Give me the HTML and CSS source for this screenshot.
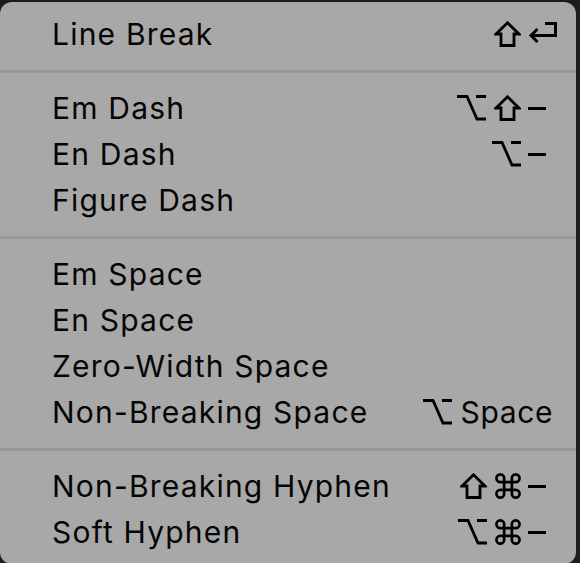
FILE: index.html
```html
<!DOCTYPE html>
<html>
<head>
<meta charset="utf-8">
<link rel="stylesheet" href="styles.css">
</head>
<body>
<div class="menu">
  <div class="row"><span class="label">Line Break</span>
    <span class="sc">
      <span class="mods">
        <svg class="mod" viewBox="0 0 27 26"><path d="M13.5 1.8 L25 13 H20 V24.5 H7 V13 H2 Z"/></svg>
      </span>
      <span class="key"><svg class="ret" viewBox="0 0 29 21"><path d="M17 1.5 H27.5 V13.5 H3 M9.5 7 L3 13.5 L9.5 20"/></svg></span>
    </span>
  </div>
  <div class="sep"></div>
  <div class="row"><span class="label">Em Dash</span>
    <span class="sc">
      <span class="mods">
        <svg class="mod" viewBox="0 0 29 26"><path d="M0 1.5 H10 L20 24 H29 M19 1.5 H29"/></svg>
        <svg class="mod" viewBox="0 0 27 26"><path d="M13.5 1.8 L25 13 H20 V24.5 H7 V13 H2 Z"/></svg>
      </span>
      <span class="key"><span class="minus"></span></span>
    </span>
  </div>
  <div class="row"><span class="label">En Dash</span>
    <span class="sc">
      <span class="mods">
        <svg class="mod" viewBox="0 0 29 26"><path d="M0 1.5 H10 L20 24 H29 M19 1.5 H29"/></svg>
      </span>
      <span class="key"><span class="minus"></span></span>
    </span>
  </div>
  <div class="row"><span class="label">Figure Dash</span></div>
  <div class="sep"></div>
  <div class="row"><span class="label">Em Space</span></div>
  <div class="row"><span class="label">En Space</span></div>
  <div class="row"><span class="label">Zero-Width Space</span></div>
  <div class="row"><span class="label">Non-Breaking Space</span>
    <span class="sc">
      <span class="mods">
        <svg class="mod" viewBox="0 0 29 26"><path d="M0 1.5 H10 L20 24 H29 M19 1.5 H29"/></svg>
      </span>
      <span class="key text">Space</span>
    </span>
  </div>
  <div class="sep"></div>
  <div class="row"><span class="label">Non-Breaking Hyphen</span>
    <span class="sc">
      <span class="mods">
        <svg class="mod" viewBox="0 0 27 26"><path d="M13.5 1.8 L25 13 H20 V24.5 H7 V13 H2 Z"/></svg>
        <svg class="mod" viewBox="0 0 27 27"><path d="M9.5 5.5 A4 4 0 1 0 5.5 9.5 H21.5 A4 4 0 1 0 17.5 5.5 V21.5 A4 4 0 1 0 21.5 17.5 H5.5 A4 4 0 1 0 9.5 21.5 Z"/></svg>
      </span>
      <span class="key"><span class="minus"></span></span>
    </span>
  </div>
  <div class="row"><span class="label">Soft Hyphen</span>
    <span class="sc">
      <span class="mods">
        <svg class="mod" viewBox="0 0 29 26"><path d="M0 1.5 H10 L20 24 H29 M19 1.5 H29"/></svg>
        <svg class="mod" viewBox="0 0 27 27"><path d="M9.5 5.5 A4 4 0 1 0 5.5 9.5 H21.5 A4 4 0 1 0 17.5 5.5 V21.5 A4 4 0 1 0 21.5 17.5 H5.5 A4 4 0 1 0 9.5 21.5 Z"/></svg>
      </span>
      <span class="key"><span class="minus"></span></span>
    </span>
  </div>
</div>
</body>
</html>
```
FILE: styles.css
```css
html, body {
  margin: 0;
  padding: 0;
  background: #1c1c1c;
  height: 563px;
  overflow: hidden;
}
.menu {
  margin-top: 2px;
  width: 576px;
  height: 562px;
  box-sizing: border-box;
  background: #a8a8a8;
  border-radius: 12px;
  padding-top: 9px;
  font-family: Inter, "Noto Sans", sans-serif;
  font-size: 30px;
  letter-spacing: 1.2px;
  color: #050505;
}
.row {
  height: 46px;
  display: flex;
  align-items: center;
  justify-content: space-between;
  padding-left: 52px;
  padding-right: 23px;
}
.sep {
  height: 3px;
  background: #989898;
  margin: 12.5px 0;
}
.sc {
  display: flex;
  align-items: center;
  gap: 7px;
}
.mods {
  display: flex;
  align-items: center;
  gap: 8px;
}
.mod {
  height: 26px;
  width: auto;
  display: block;
  fill: none;
  stroke: #000;
  stroke-width: 2.8;
}
.key {
  width: 25px;
  display: flex;
  align-items: center;
}
.ret {
  flex: none;
  width: 29px;
  height: 21px;
  display: block;
  fill: none;
  stroke: #000;
  stroke-width: 3;
  margin-top: -3px;
}
.minus {
  display: block;
  width: 18px;
  height: 3px;
  background: #000;
}
.key.text {
  width: auto;
  margin-left: 2px;
  letter-spacing: 0.6px;
}
```
